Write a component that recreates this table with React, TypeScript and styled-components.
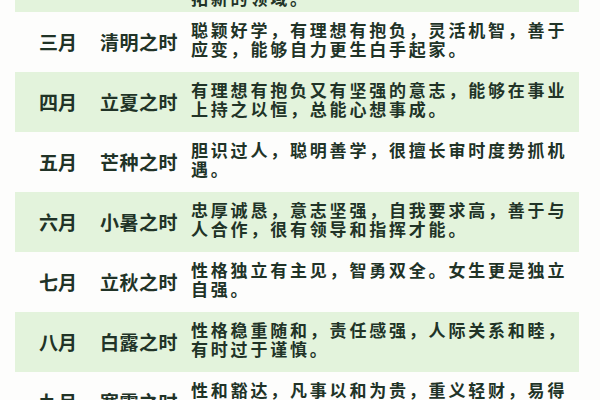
import React from "react";
import styled, { createGlobalStyle } from "styled-components";

interface IRow {
  month: string;
  solar: string;
  lines: string[];
}

const rows: IRow[] = [
  {
    month: "二月",
    solar: "惊蛰之时",
    lines: ["积极乐观，富有创造力，敢于挑战", "自我，勇于开拓，有进取之心，善于", "拓新的领域。"],
  },
  {
    month: "三月",
    solar: "清明之时",
    lines: ["聪颖好学，有理想有抱负，灵活机智，善于", "应变，能够自力更生白手起家。"],
  },
  {
    month: "四月",
    solar: "立夏之时",
    lines: ["有理想有抱负又有坚强的意志，能够在事业", "上持之以恒，总能心想事成。"],
  },
  {
    month: "五月",
    solar: "芒种之时",
    lines: ["胆识过人，聪明善学，很擅长审时度势抓机", "遇。"],
  },
  {
    month: "六月",
    solar: "小暑之时",
    lines: ["忠厚诚恳，意志坚强，自我要求高，善于与", "人合作，很有领导和指挥才能。"],
  },
  {
    month: "七月",
    solar: "立秋之时",
    lines: ["性格独立有主见，智勇双全。女生更是独立", "自强。"],
  },
  {
    month: "八月",
    solar: "白露之时",
    lines: ["性格稳重随和，责任感强，人际关系和睦，", "有时过于谨慎。"],
  },
  {
    month: "九月",
    solar: "寒露之时",
    lines: ["性和豁达，凡事以和为贵，重义轻财，易得", "人心，朋友众多。"],
  },
];

const GlobalStyle = createGlobalStyle`
  html, body {
    margin: 0;
    padding: 0;
    background: #fdfdfc;
    overflow: hidden;
  }
  body {
    font-family: "Noto Sans CJK SC", "Noto Sans", sans-serif;
  }
`;

const Page = styled.div`
  width: 600px;
  height: 400px;
  overflow: hidden;
  background: #fdfdfc;
`;

// the list is scrolled a bit, the first row is only half in view
const Table = styled.div`
  width: 564px;
  margin: -48px 0 0 15px;
  display: flex;
  flex-direction: column;
`;

const Row = styled.div<{ $shaded: boolean }>`
  height: 60px;
  display: grid;
  grid-template-columns: 38px 78px 1fr;
  column-gap: 23px;
  align-items: center;
  padding-left: 24px;
  background: ${(p) => (p.$shaded ? "#e3f3dc" : "#fdfdfc")};
  color: #213327;
`;

const Month = styled.div`
  font-size: 19px;
  font-weight: 700;
  line-height: 20px;
  white-space: nowrap;
`;

const Solar = styled.div`
  font-size: 19px;
  font-weight: 700;
  line-height: 20px;
  letter-spacing: 0.5px;
  white-space: nowrap;
`;

const Desc = styled.div`
  margin-left: -10px;
  padding-bottom: 5px;
  font-size: 17px;
  font-weight: 700;
  line-height: 18.5px;
  letter-spacing: 2.8px;
  white-space: nowrap;
`;

const Line = styled.div`
  display: block;
`;

export default function App() {
  return (
    <Page>
      <GlobalStyle />
      <Table>
        {rows.map((row, index) => (
          <Row key={row.month} $shaded={index % 2 === 0}>
            <Month>{row.month}</Month>
            <Solar>{row.solar}</Solar>
            <Desc>
              {row.lines.map((line) => (
                <Line key={line}>{line}</Line>
              ))}
            </Desc>
          </Row>
        ))}
      </Table>
    </Page>
  );
}
